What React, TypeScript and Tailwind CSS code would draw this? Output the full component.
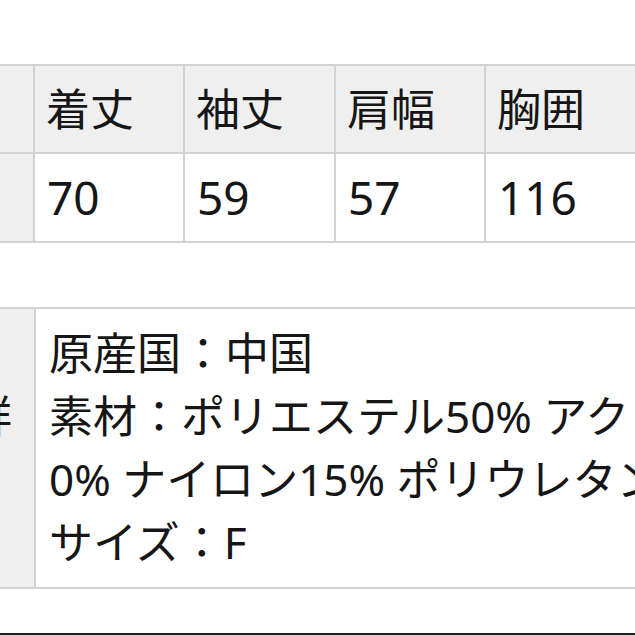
const font = { fontFamily: '"Noto Sans", "Noto Sans CJK JP", sans-serif' };

const headers = ['', '着丈', '袖丈', '肩幅', '胸囲'];
const values = ['', '70', '59', '57', '116'];

function SizeTable() {
  return (
    <div className="ml-[-115px] mt-[64px] w-[760px] border-y-2 border-[#d2d2d2]">
      <div className="grid grid-cols-[150px_150px_151px_150px_159px] border-b-2 border-[#d2d2d2] bg-[#efefef]">
        {headers.map((h, i) => (
          <div
            key={i}
            className="flex h-[86px] items-center border-r-2 border-[#d2d2d2] pl-[11px] text-[44px] text-[#161616]"
          >
            {h}
          </div>
        ))}
      </div>
      <div className="grid grid-cols-[150px_150px_151px_150px_159px] bg-white">
        {values.map((v, i) => (
          <div
            key={i}
            className={`flex h-[87px] items-center border-r-2 border-[#d2d2d2] pl-[12px] text-[46px] text-[#161616] ${
              i === 0 ? 'bg-[#efefef]' : ''
            }`}
          >
            {v}
          </div>
        ))}
      </div>
    </div>
  );
}

function DetailTable() {
  return (
    <div className="ml-[-132px] mt-[64px] flex w-[900px] border-y-2 border-[#d2d2d2]">
      <div className="flex w-[168px] shrink-0 items-center border-r-2 border-[#d2d2d2] bg-[#efefef] px-[12px] text-[44px] leading-[63px] text-[#161616]">
        <div>
          商品詳
          <br />細
        </div>
      </div>
      <div className="flex-1 overflow-hidden whitespace-nowrap bg-white pb-[13px] pl-[13px] pt-[13px] text-[44px] leading-[63px] text-[#161616]">
        <div>原産国：中国</div>
        <div>素材：ポリエステル50% アクリル2</div>
        <div>0% ナイロン15% ポリウレタン15%</div>
        <div>サイズ：F</div>
      </div>
    </div>
  );
}

export default function App() {
  return (
    <div className="h-[635px] w-[635px] overflow-hidden bg-white" style={font}>
      <SizeTable />
      <DetailTable />
      <div className="mt-[44px] h-[2px] w-full bg-[#222]" />
    </div>
  );
}
